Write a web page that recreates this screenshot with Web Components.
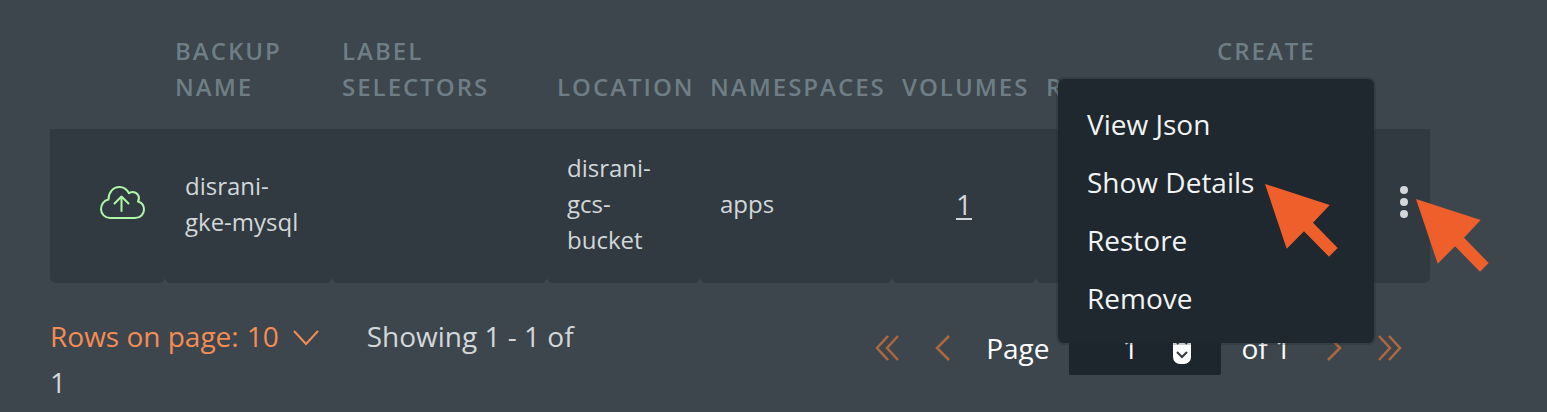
<!DOCTYPE html>
<html lang="en">
<head>
<meta charset="utf-8">
<title>Backups</title>
<style>
  body { margin: 0; background: #3c464c; }
</style>
</head>
<body>
<backups-page></backups-page>

<template id="backups-page">
  <style>
    :host {
      display: block;
      padding: 33px 117px 8px 50px;
      color: #d3d7da;
      font-family: "Open Sans", "Noto Sans", sans-serif;
    }
  </style>
  <backup-table></backup-table>
  <table-pager></table-pager>
</template>

<template id="backup-table">
  <style>
    :host { display: block; }
    table { width: 100%; table-layout: fixed; border-collapse: separate; border-spacing: 0; font-size: 24px; line-height: 36px; }
    th {
      padding: 0 0 24px 10px;
      vertical-align: bottom;
      text-align: left;
      color: #6f7e86;
      font-weight: 600;
      letter-spacing: 2px;
      text-transform: uppercase;
    }
    td {
      height: 108px;
      padding: 21px 20px 25px;
      background: #303a40;
      border-radius: 0 0 6px 6px;
    }
    td.status { padding-left: 50px; }
    td.status svg { display: block; margin-bottom: 2px; }
    td.count { text-align: center; font-size: 28px; }
    td.count a { color: inherit; text-decoration-thickness: 2px; text-underline-offset: 3px; }
    td.actions { position: relative; padding-left: 0; padding-right: 0; }
  </style>
  <table>
    <colgroup>
      <col style="width:115px"><col style="width:167px"><col style="width:215px"><col style="width:153px"><col style="width:192px"><col style="width:144px"><col style="width:171px"><col style="width:163px"><col style="width:60px">
    </colgroup>
    <thead>
      <tr>
        <th></th><th>Backup<br>Name</th><th>Label<br>Selectors</th><th>Location</th><th>Namespaces</th><th>Volumes</th><th>Resources</th><th>Create<br>Time</th><th></th>
      </tr>
    </thead>
    <tbody>
      <tr>
        <td class="status"><svg width="46" height="34" viewBox="0 0 46 34" fill="none" stroke="#aef7a8" stroke-width="2" stroke-linecap="round" stroke-linejoin="round" role="img" aria-label="Uploaded"><path d="M10 32H35C40.500 32 44 28 44 23.500C44 19.500 41.500 16.500 38 15.500C40.500 11 37.500 6 32.500 6C31 6 29.800 6.500 29 7.300C27 3.500 23.500 1 19.500 1C13 1 8.500 6.500 8.500 13.500C4 14.500 1 18.500 1 23C1 28 5 32 10 32ZM21.500 25V11M14.500 17.500L21.500 10.500L28.500 17.500"/></svg></td>
        <td>disrani-<br>gke-mysql</td>
        <td></td>
        <td>disrani-<br>gcs-<br>bucket</td>
        <td>apps</td>
        <td class="count"><a href="#volumes">1</a></td>
        <td></td>
        <td></td>
        <td class="actions">
          <row-actions>
            <menu-item>View Json</menu-item>
            <menu-item>Show Details</menu-item>
            <menu-item>Restore</menu-item>
            <menu-item>Remove</menu-item>
          </row-actions>
        </td>
      </tr>
    </tbody>
  </table>
</template>

<template id="row-actions">
  <style>
    :host { display: block; }
    .toggle { display: block; width: 32px; height: 48px; margin: 0 0 4px 18px; padding: 0; border: 0; background: none; color: inherit; }
    .toggle svg { display: block; margin: auto; fill: currentColor; }
    .menu {
      position: absolute;
      z-index: 2;
      top: -50px;
      right: 56px;
      width: 316px;
      box-sizing: border-box;
      padding: 16px 0;
      border-radius: 6px;
      background: #1e282e;
      box-shadow: 0 0 0 2px rgba(30, 40, 46, .25);
    }
    pointer-arrow { position: absolute; z-index: 3; }
    .at-item { top: 55px; right: 92px; }
    .at-toggle { top: 70px; right: -59px; }
  </style>
  <button class="toggle" aria-label="Row actions" aria-expanded="true">
    <svg width="8" height="34" viewBox="0 0 8 34"><circle cx="4" cy="5" r="4"/><circle cx="4" cy="17" r="4"/><circle cx="4" cy="29" r="4"/></svg>
  </button>
  <div class="menu" role="menu"><slot></slot></div>
  <pointer-arrow class="at-item"></pointer-arrow>
  <pointer-arrow class="at-toggle"></pointer-arrow>
</template>

<template id="menu-item">
  <style>
    :host { display: block; }
    button { display: block; width: 100%; padding: 0 29px; border: 0; background: none; color: #f2f3f4; font: inherit; font-size: 28px; line-height: 58px; text-align: left; }
  </style>
  <button role="menuitem"><slot></slot></button>
</template>

<template id="pointer-arrow">
  <style>
    :host { display: block; pointer-events: none; }
    svg { display: block; }
  </style>
  <svg width="73" height="73" viewBox="0 0 73 73" fill="#ee5f2b" aria-hidden="true"><path d="M0 0L64.700 21L48 38.700L72.700 64L64 72.700L39 47.300L21.700 64.700Z"/></svg>
</template>

<template id="table-pager">
  <style>
    :host { display: grid; grid-template-columns: 39% 1fr; align-items: start; padding-top: 30px; font-size: 28px; }
    .summary { line-height: 46px; }
    .rows { display: inline-flex; align-items: center; margin-right: 48px; color: #f58c55; vertical-align: top; }
    .rows select { appearance: none; width: 32px; margin: 0 0 0 8px; padding: 0; border: 0; background: none; color: inherit; font: inherit; line-height: 46px; }
    .rows svg { margin: 4px 0 0 14px; }
    .pages { display: flex; align-items: center; justify-content: flex-end; gap: 20px; padding: 8px 28px 0 0; color: #fff; line-height: 52px; }
    .steps { display: flex; gap: 36px; }
    .steps.back { margin-right: 16px; }
    .steps.next { margin-left: 16px; }
    .steps button { display: block; padding: 0; border: 0; background: none; color: #ad6840; }
    svg { fill: none; stroke: currentColor; stroke-width: 2; }
    .steps svg { display: block; stroke-width: 2.500; }
    .field { display: flex; align-items: center; width: 152px; height: 54px; border-radius: 2px; background: #1d262c; }
    .field input { width: 104px; height: 52px; box-sizing: border-box; padding: 0 0 0 18px; border: 0; background: none; color: inherit; font: inherit; text-align: center; }
    .field svg { color: #303a40; }
  </style>
  <div class="summary">
    <span class="rows"><label for="rows">Rows on page:</label><select id="rows"><option>10</option></select><svg width="26" height="16" viewBox="0 0 26 16" aria-hidden="true"><path d="M1 1L13 14L25 1"/></svg></span><span>Showing 1 - 1 of</span> <span>1</span>
  </div>
  <div class="pages">
    <div class="steps back">
      <button aria-label="First page"><svg width="24" height="26" viewBox="0 0 24 26"><path d="M13 1L2 13L13 25M23 1L12 13L23 25"/></svg></button>
      <button aria-label="Previous page"><svg width="15" height="26" viewBox="0 0 15 26"><path d="M14 1L2 13L14 25"/></svg></button>
    </div>
    <label for="page">Page</label>
    <div class="field"><input id="page" value="1"><svg width="18" height="32" viewBox="0 0 18 32" aria-hidden="true"><rect width="18" height="32" rx="7" fill="#fff" stroke="none"/><path d="M4 12L9 7L14 12M4 20L9 25L14 20"/></svg></div>
    <span>of 1</span>
    <div class="steps next">
      <button aria-label="Next page"><svg width="15" height="26" viewBox="0 0 15 26"><path d="M1 1L13 13L1 25"/></svg></button>
      <button aria-label="Last page"><svg width="24" height="26" viewBox="0 0 24 26"><path d="M1 1L12 13L1 25M11 1L22 13L11 25"/></svg></button>
    </div>
  </div>
</template>

<script>
  class TemplateElement extends HTMLElement {
    constructor() {
      super();
      const template = document.getElementById(this.localName);
      this.attachShadow({ mode: "open" }).append(template.content.cloneNode(true));
    }
  }
  customElements.define("pointer-arrow", class PointerArrow extends TemplateElement {});
  customElements.define("menu-item", class MenuItem extends TemplateElement {});
  customElements.define("row-actions", class RowActions extends TemplateElement {});
  customElements.define("table-pager", class TablePager extends TemplateElement {});
  customElements.define("backup-table", class BackupTable extends TemplateElement {});
  customElements.define("backups-page", class BackupsPage extends TemplateElement {});
</script>
</body>
</html>
